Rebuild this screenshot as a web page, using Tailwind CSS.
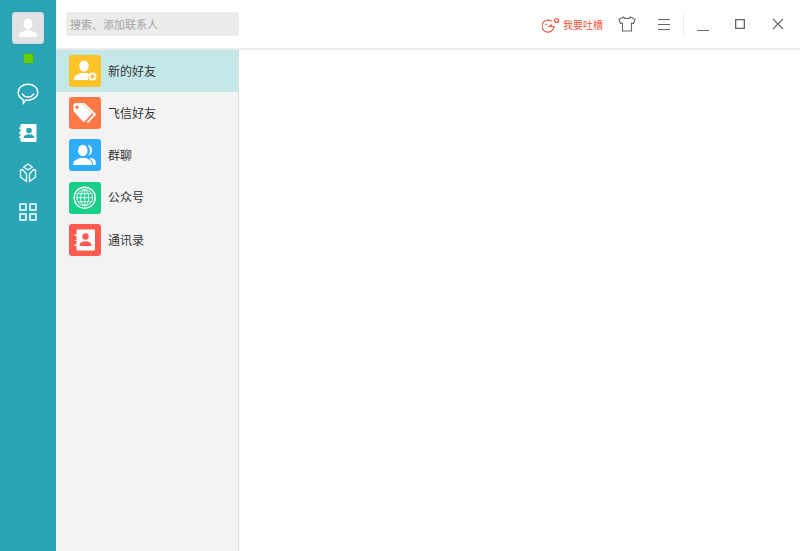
<!DOCTYPE html>
<html lang="zh">
<head>
  <meta charset="UTF-8">
  <script src="https://cdn.jsdelivr.net/npm/@tailwindcss/browser@4"></script>
  <title>飞信</title>
</head>
<body class="w-[800px] h-[551px] overflow-hidden bg-white font-['Liberation_Sans','Noto_Sans_CJK_SC',sans-serif]">
  <div class="flex h-[551px]">
    <!-- left rail -->
    <nav class="w-[56px] shrink-0 bg-[#2aa5b5] flex flex-col items-center pt-[12px]">
      <div class="w-[32px] h-[32px] rounded-[3px] bg-[#e2e2e2] border border-[#d0dfe1] flex items-center justify-center">
        <svg width="20" height="20" viewBox="0 0 20 20" fill="#fff"><ellipse cx="10" cy="6" rx="4.300" ry="5.500"/><path d="M1 19v-2c0-2.500 4-3.500 6.500-4.500h5c2.500 1 6.500 2 6.500 4.500v2z"/></svg>
      </div>
      <div class="w-[11px] h-[11px] mt-[9px] rounded-[2px] bg-[#66cc00] border border-[#3fa36a]"></div>
      <svg class="mt-[19px]" width="22" height="22" viewBox="0 0 22 22" fill="none" stroke="#fff" stroke-width="1.400"><path d="M11 1.200c5.300 0 9.800 3.500 9.800 8s-4.500 8-9.800 8c-.8 0-1.600-.1-2.300-.2L6.300 20.300 6 16.400C3.100 15 1.200 12.400 1.200 9.200c0-4.500 4.500-8 9.800-8z"/><path d="M5 10.500c1.200 2.300 3.500 3.500 6 3.500s4.800-1.200 6-3.500"/></svg>
      <svg class="mt-[19px]" width="18" height="18" viewBox="0 0 18 18"><path fill="#fff" d="M2.500 0h14a1 1 0 0 1 1 1v16a1 1 0 0 1-1 1h-14a1 1 0 0 1-1-1v-3h-1.500v-1.500h1.500v-3h-1.500V8h1.500V5h-1.500V3.500h1.500V1a1 1 0 0 1 1-1z"/><circle cx="10" cy="6.500" r="2.800" fill="#2aa5b5"/><path fill="#2aa5b5" d="M4.800 14v-1c0-1.500 2.500-2.300 3.700-2.800h3c1.200.5 3.700 1.300 3.700 2.800v1z"/></svg>
      <svg class="mt-[21px]" width="18" height="20" viewBox="0 0 18 20" fill="none" stroke="#e8f6f7" stroke-width="1.400" stroke-linejoin="round"><path d="M9 1.200 13.500 4 9 6.800 4.500 4z"/><path d="M1.500 7v7l6 4.500v-7.500L3.500 6.500z"/><path d="M16.500 7v7l-6 4.500v-7.500l4-4.500z"/></svg>
      <div class="mt-[20px] grid grid-cols-2 gap-[2px]">
        <div class="w-[8px] h-[8px] rounded-[1px] border-2 border-[#cdebee]"></div>
        <div class="w-[8px] h-[8px] rounded-[1px] border-2 border-[#cdebee]"></div>
        <div class="w-[8px] h-[8px] rounded-[1px] border-2 border-[#cdebee]"></div>
        <div class="w-[8px] h-[8px] rounded-[1px] border-2 border-[#cdebee]"></div>
      </div>
    </nav>

    <div class="flex-1 flex flex-col min-w-0">
      <!-- top bar -->
      <header class="h-[50px] shrink-0 flex items-center border-b-2 border-[#ebebeb]">
        <div class="ml-[10px] w-[173px] h-[24px] rounded-[3px] bg-[#ececec] text-[11px] text-[#a3a3a3] flex items-center pl-[4px] pt-[2px]">搜索、添加联系人</div>
        <div class="ml-auto flex items-center">
          <svg width="18" height="18" viewBox="0 0 18 18" fill="none" stroke="#f0553a" stroke-width="1.200"><path d="M9.500 6.200A6 6 0 1 0 12 11.500H7.500l2.500-2"/><circle cx="4" cy="9.500" r=".8" fill="#f0553a" stroke="none"/><circle cx="14.500" cy="5.500" r="2"/></svg>
          <span class="ml-[3px] text-[10px] text-[#f0553a] pt-[2px]">我要吐槽</span>
          <svg class="ml-[15px]" width="18" height="16" viewBox="0 0 18 16" fill="none" stroke="#666" stroke-width="1.100" stroke-linejoin="round"><path d="M5.500 1 1 3.500l1.500 4L4.500 7v8h9V7l2 .5 1.500-4L12.500 1c-.5 2-6.500 2-7 0z"/></svg>
          <div class="ml-[22px] w-[12px] flex flex-col gap-[4px]">
            <div class="h-[1px] bg-[#666]"></div>
            <div class="h-[1px] bg-[#666]"></div>
            <div class="h-[1px] bg-[#666]"></div>
          </div>
          <div class="ml-[13px] w-[1px] h-[21px] bg-[#ececec]"></div>
          <div class="ml-[13px] w-[12px] h-[1px] mt-[12px] bg-[#666]"></div>
          <svg class="ml-[26px]" width="10" height="10" viewBox="0 0 10 10" fill="none" stroke="#666" stroke-width="1.300"><rect x=".65" y=".65" width="8.700" height="8.700"/></svg>
          <svg class="ml-[27px] mr-[16px]" width="12" height="12" viewBox="0 0 12 12" stroke="#666" stroke-width="1.100"><path d="M1 1l10 10M11 1 1 11"/></svg>
        </div>
      </header>

      <div class="flex-1 flex min-h-0">
        <!-- contact categories -->
        <aside class="w-[183px] shrink-0 bg-[#f3f3f3] border-r border-[#dcdcdc] text-[12px] text-[#333]">
          <div class="h-[42px] flex items-center pl-[13px] bg-[#c4e7e8]">
            <svg class="rounded-[3px] bg-[#ffc328]" width="32" height="32" viewBox="0 0 32 32" fill="#fff"><ellipse cx="15" cy="11" rx="4.700" ry="5.500"/><path d="M5 25v-2c0-2.500 4-3.500 7-5h6c1 .5 2 .9 3 1.200a5.500 5.500 0 0 0-2 5.800z"/><circle cx="23.500" cy="21.500" r="4"/><path d="M22.700 19h1.600v1.700H26v1.600h-1.700V24h-1.600v-1.700H21v-1.600h1.700z" fill="#ffc328"/></svg>
            <span class="ml-[7px] pt-[1px]">新的好友</span>
          </div>
          <div class="h-[42px] flex items-center pl-[13px]">
            <svg class="rounded-[3px] bg-[#ff7846]" width="32" height="32" viewBox="0 0 32 32" fill="#fff"><path fill-rule="evenodd" d="M4.500 7.500 6 6h7l9.500 9.500a1.200 1.200 0 0 1 0 1.700l-7 7.300a1.200 1.200 0 0 1-1.700 0L4.500 14zM8 8.500a1.700 1.700 0 1 0 .01 0z"/><path d="M15.500 6l11 10.500a1.300 1.300 0 0 1 0 1.700l-7.500 7.800-1.300-1.300 7-7.300L13.500 6z"/></svg>
            <span class="ml-[7px] pt-[1px]">飞信好友</span>
          </div>
          <div class="h-[42px] flex items-center pl-[13px]">
            <svg class="rounded-[3px] bg-[#2dadfc]" width="32" height="32" viewBox="0 0 32 32" fill="#fff"><ellipse cx="13.800" cy="11.500" rx="4.700" ry="5.800"/><path d="M4.300 26v-2c0-2.500 4-3.500 6.700-5h6c2.700 1.500 5.700 2.500 5.700 5v2z"/><path d="M18.500 6c2.700 0 4.500 2.300 4.500 5.300s-1.600 4.700-3.500 5.500c1-1.500 1.500-3.400 1.400-5.300-.1-2.200-1-4-2.400-5.500zM23 19c2 .8 3.700 2 3.700 3.800V26h-2.700c0-3-1.500-5.500-4-6.700 1 0 2-.1 3-.3z"/></svg>
            <span class="ml-[7px] pt-[1px]">群聊</span>
          </div>
          <div class="h-[43px] flex items-center pl-[13px]">
            <svg class="rounded-[3px] bg-[#17cf89]" width="32" height="32" viewBox="0 0 32 32" fill="none" stroke="#fff"><circle cx="15.700" cy="15.700" r="10.500" stroke-width="1.400"/><circle cx="15.700" cy="15.700" r="8" stroke-width=".9"/><ellipse cx="15.700" cy="15.700" rx="4" ry="8" stroke-width=".9"/><path d="M15.700 7.700v16M7.700 15.700h16M8.700 11.700h14M8.700 19.700h14" stroke-width=".9"/></svg>
            <span class="ml-[7px] pt-[1px]">公众号</span>
          </div>
          <div class="h-[42px] flex items-center pl-[13px]">
            <svg class="rounded-[3px] bg-[#ff5a50]" width="32" height="32" viewBox="0 0 32 32"><path fill="#fff" d="M8.500 5.500h16.500a1 1 0 0 1 1 1v19a1 1 0 0 1-1 1H8.500a1 1 0 0 1-1-1v-3.500H5.500v-1.500h2v-4h-2V16h2v-4h-2v-1.500h2v-4a1 1 0 0 1 1-1z"/><circle cx="16.500" cy="12.500" r="3.200" fill="#ff5a50"/><path fill="#ff5a50" d="M10.500 22v-1.500c0-1.700 3-2.500 4.300-3.200h3.400c1.300.7 4.300 1.500 4.300 3.200V22z"/></svg>
            <span class="ml-[7px] pt-[1px]">通讯录</span>
          </div>
        </aside>
        <main class="flex-1 bg-white"></main>
      </div>
    </div>
  </div>
</body>
</html>
